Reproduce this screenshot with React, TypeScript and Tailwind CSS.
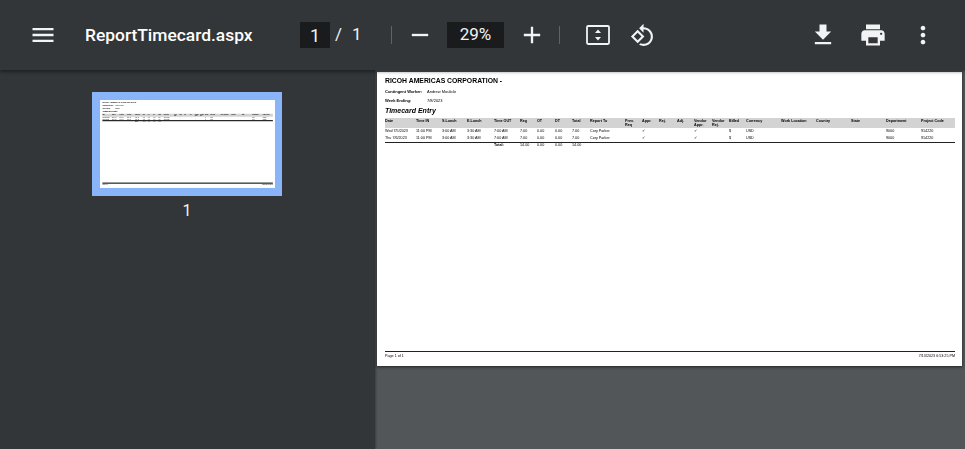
const icon = {
  menu: "M3 18h18v-2H3v2zm0-5h18v-2H3v2zm0-7v2h18V6H3z",
  minus: "M19 13H5v-2h14v2z",
  plus: "M19 13h-6v6h-2v-6H5v-2h6V5h2v6h6v2z",
  rotate: "M7.34 6.41L.86 12.9l6.49 6.48 6.49-6.48-6.5-6.49zM3.69 12.9l3.66-3.66L11 12.9l-3.66 3.66-3.65-3.66zm15.67-6.26C17.61 4.88 15.3 4 13 4V.76L8.76 5 13 9.24V6c1.79 0 3.58.68 4.95 2.05 2.73 2.73 2.73 7.17 0 9.9C16.58 19.32 14.79 20 13 20c-.97 0-1.94-.21-2.84-.61l-1.49 1.49C10.02 21.62 11.51 22 13 22c2.3 0 4.61-.88 6.36-2.64 3.52-3.51 3.52-9.21 0-12.72z",
  download: "M19 9h-4V3H9v6H5l7 7 7-7zM5 18v2h14v-2H5z",
  print: "M19 8H5c-1.66 0-3 1.34-3 3v6h4v4h12v-4h4v-6c0-1.66-1.34-3-3-3zm-3 11H8v-5h8v5zm3-7c-.55 0-1-.45-1-1s.45-1 1-1 1 .45 1 1-.45 1-1 1zm-1-9H6v4h12V3z",
  more: "M12 8c1.1 0 2-.9 2-2s-.9-2-2-2-2 .9-2 2 .9 2 2 2zm0 2c-1.1 0-2 .9-2 2s.9 2 2 2 2-.9 2-2-.9-2-2-2zm0 6c-1.1 0-2 .9-2 2s.9 2 2 2 2-.9 2-2-.9-2-2-2z",
};

function Icon({ d, className }: { d: string; className: string }) {
  return (
    <svg viewBox="0 0 24 24" fill="#f1f3f4" className={className}>
      <path d={d} />
    </svg>
  );
}

const cols =
  "grid grid-cols-[31px_26px_25px_27px_26px_17px_18px_17px_18px_35px_17px_17px_18px_17px_18px_17px_17px_35px_35px_35px_35px_35px_34px]";

const headers = [
  "Date", "Time IN", "S.Lunch", "E.Lunch", "Time OUT", "Reg", "OT", "DT", "Total", "Report To",
  "Prev. Req", "Appr.", "Rej.", "Adj.", "Vendor Appr.", "Vendor Rej.", "Billed", "Currency",
  "Work Location", "Country", "State", "Department", "Project Code",
];

const rows = [
  ["Wed 7/5/2023", "11:00 PM", "3:00 AM", "3:30 AM", "7:00 AM", "7.00", "0.00", "0.00", "7.00", "Cory Parker", "", "✓", "", "", "✓", "", "$", "USD", "", "", "", "9000", "914220"],
  ["Thu 7/6/2023", "11:00 PM", "3:00 AM", "3:30 AM", "7:00 AM", "7.00", "0.00", "0.00", "7.00", "Cory Parker", "", "✓", "", "", "✓", "", "$", "USD", "", "", "", "9000", "914220"],
];

const total = ["", "", "", "", "Total:", "14.00", "0.00", "0.00", "14.00"];

function Page({ thumb = false }: { thumb?: boolean }) {
  return (
    <div className={`w-[585px] h-[294px] bg-white pl-[8px] pr-[7px] pt-[4px] pb-[6px] flex flex-col text-black font-['Liberation_Sans',Arial,sans-serif] ${thumb ? "" : "blur-[0.3px]"}`}>
      <div className="text-[6.85px] leading-[9px] font-bold h-[11px]">RICOH AMERICAS CORPORATION -</div>
      <div className="flex text-[4px] leading-[6px] mt-[2px] h-[9px]">
        <span className="w-[42px] font-bold">Contingent Worker:</span>
        <span>Andrew Moulicle</span>
      </div>
      <div className="flex text-[4px] leading-[6px] h-[8px]">
        <span className="w-[42px] font-bold">Week Ending:</span>
        <span>7/8/2023</span>
      </div>
      <div className="text-[7px] leading-[10px] font-bold italic h-[12px]">Timecard Entry</div>
      <div className={`${cols} bg-[#d3d3d3] h-[10px] text-[3.7px] leading-[4px] font-bold`}>
        {headers.map((h) => (
          <div key={h} className="pt-[1px] pr-[3px]">{h}</div>
        ))}
      </div>
      <div className={`border-[#222222] h-[15px] ${thumb ? "border-b-[4px]" : "border-b-[1.5px]"}`}>
        {rows.map((r, i) => (
          <div key={i} className={`${cols} h-[6.5px] text-[3.7px] leading-[6px]`}>
            {r.map((c, j) => (
              <div key={j}>{c}</div>
            ))}
          </div>
        ))}
      </div>
      <div className={`${cols} h-[6px] text-[3.7px] leading-[5px]`}>
        {total.map((c, j) => (
          <div key={j} className={c === "Total:" ? "font-bold" : ""}>{c}</div>
        ))}
      </div>
      <div className={`mt-auto border-[#222222] flex justify-between text-[3.7px] leading-[6px] pt-[1px] ${thumb ? "border-t-[4px] h-[12px]" : "border-t-[1px] h-[9px]"}`}>
        <span>Page 1 of 1</span>
        <span>7/13/2023 6:53:25 PM</span>
      </div>
    </div>
  );
}

function Divider() {
  return <div className="w-px h-[18px] bg-[#5f6368]" />;
}

export default function App() {
  return (
    <div className="w-[965px] h-[449px] overflow-hidden flex flex-col bg-[#525659] font-['Roboto',sans-serif]">
      <header className="h-[70px] shrink-0 bg-[#323639] flex items-center text-[#f1f3f4] shadow-[0_2px_3px_rgba(0,0,0,0.4)] z-10">
        <Icon d={icon.menu} className="w-[28px] h-[28px] ml-[29px]" />
        <div className="ml-[28px] w-[215px] text-[17.4px] font-medium text-white">ReportTimecard.aspx</div>
        <div className="w-[30px] h-[26px] bg-[#191b1c] flex items-center justify-center text-[18px]">1</div>
        <span className="ml-[5px] w-[5px] text-[17px]">/</span>
        <span className="ml-[12px] w-[10px] text-[17px]">1</span>
        <div className="ml-[29px]"><Divider /></div>
        <Icon d={icon.minus} className="w-[28px] h-[28px] ml-[14px]" />
        <div className="ml-[13px] w-[57px] h-[26px] bg-[#191b1c] flex items-center justify-center text-[17px]">29%</div>
        <Icon d={icon.plus} className="w-[28px] h-[28px] ml-[14px]" />
        <div className="ml-[13px]"><Divider /></div>
        <svg viewBox="0 0 24 20" className="w-[24px] h-[20px] ml-[26px]">
          <rect x="1" y="1" width="22" height="18" rx="1.2" fill="none" stroke="#f1f3f4" strokeWidth="1.8" />
          <path d="M12 4.5l3 3.5H9zM12 15.5l-3-3.5h6z" fill="#f1f3f4" />
        </svg>
        <Icon d={icon.rotate} className="w-[25px] h-[25px] ml-[20px]" />
        <Icon d={icon.download} className="w-[28px] h-[28px] ml-[154px]" />
        <Icon d={icon.print} className="w-[28px] h-[28px] ml-[22px]" />
        <Icon d={icon.more} className="w-[28px] h-[28px] ml-[22px]" />
      </header>
      <div className="flex-1 flex min-h-0">
        <aside className="w-[375px] shrink-0 bg-[#323639] flex flex-col items-center pt-[22px] pr-[1px] shadow-[1px_0_2px_rgba(0,0,0,0.3)]">
          <div className="w-[190px] h-[104px] bg-[#8ab4f8] flex items-center justify-center">
            <div className="w-[175px] h-[88px] overflow-hidden">
              <div className="origin-top-left scale-[0.2991]">
                <Page thumb />
              </div>
            </div>
          </div>
          <div className="mt-[5px] text-[16px] leading-[20px] text-[#f1f3f4]">1</div>
        </aside>
        <main className="flex-1 pl-[2px] pt-[2px]">
          <div className="shadow-[0_1px_3px_rgba(0,0,0,0.6)] w-[585px]">
            <Page />
          </div>
        </main>
      </div>
    </div>
  );
}
